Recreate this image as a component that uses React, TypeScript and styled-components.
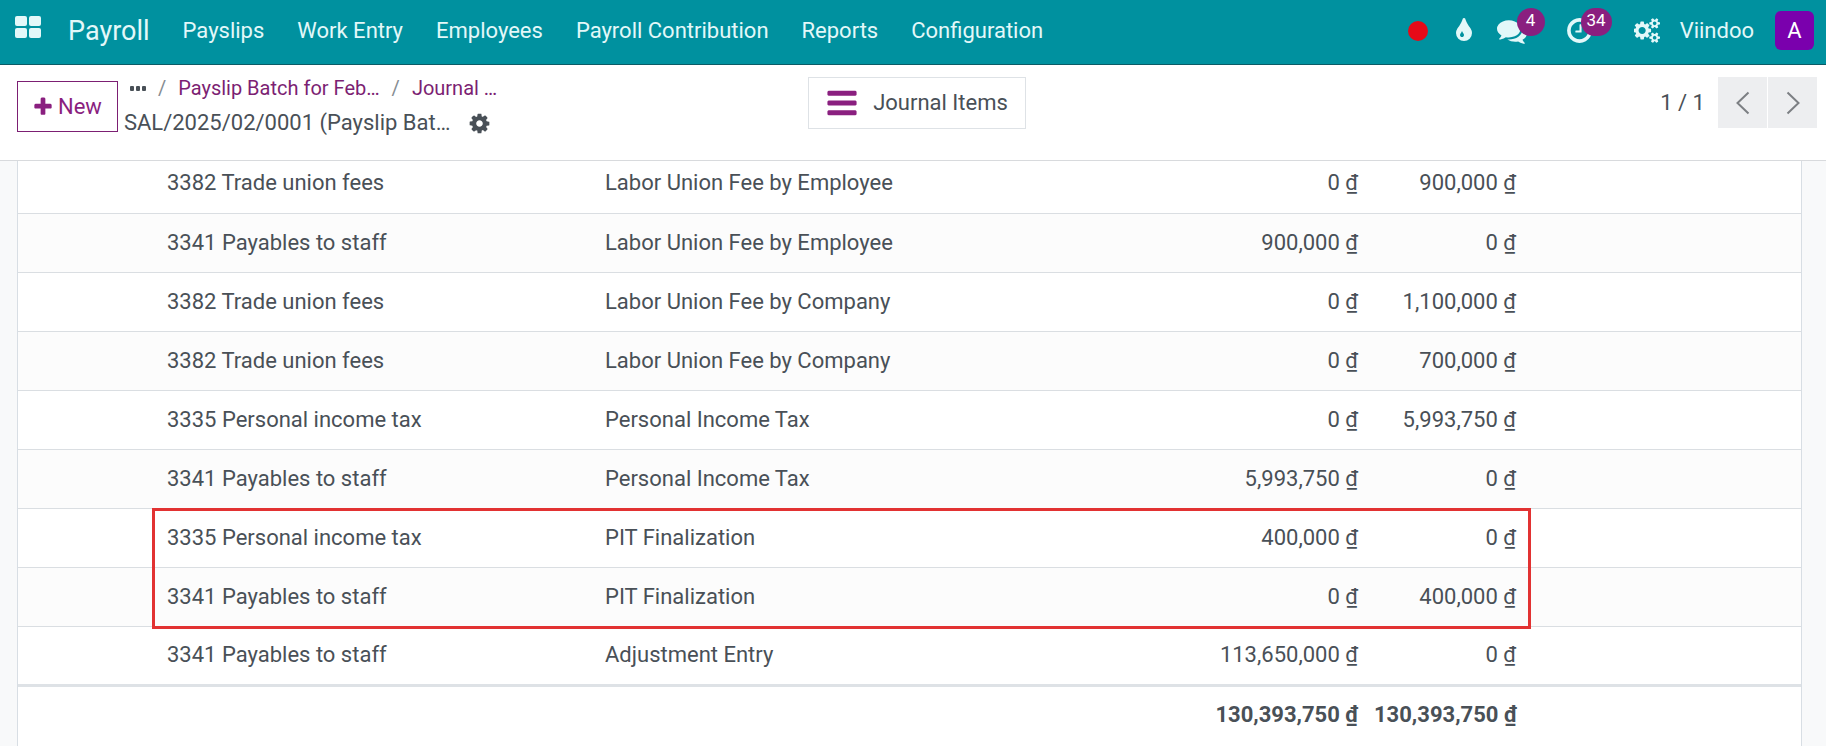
import React from "react";
import styled, { createGlobalStyle, css } from "styled-components";

const GlobalStyle = createGlobalStyle`
  *, *::before, *::after { box-sizing: border-box; }
  body {
    margin: 0;
    font-family: Roboto, "Liberation Sans", sans-serif;
    font-size: 22px;
    line-height: 32px;
    color: #495057;
    background: #f8f9fa;
  }
  button { font: inherit; color: inherit; border: 0; background: none; padding: 0; cursor: pointer; }
  a { color: inherit; text-decoration: none; }
`;

const Page = styled.div`
  display: flex;
  flex-direction: column;
  height: 100vh;
  overflow: hidden;
`;

/* ---------- icons ---------- */

const Svg = styled.svg`
  display: block;
  flex: none;
  fill: currentColor;
`;

type IconProps = { size: number; d: string; box?: number };

const Icon = ({ size, d, box = 1792 }: IconProps) => (
  <Svg width={Math.round((size * box) / 1792)} height={size} viewBox={`0 0 ${box} 1792`} aria-hidden="true">
    <path d={d} />
  </Svg>
);

const PLUS =
  "M1600 736v192q0 40-28 68t-68 28h-416v416q0 40-28 68t-68 28h-192q-40 0-68-28t-28-68v-416h-416q-40 0-68-28t-28-68v-192q0-40 28-68t68-28h416v-416q0-40 28-68t68-28h192q40 0 68 28t28 68v416h416q40 0 68 28t28 68z";
const BARS =
  "M1664 1344v128q0 26-19 45t-45 19h-1408q-26 0-45-19t-19-45v-128q0-26 19-45t45-19h1408q26 0 45 19t19 45zm0-512v128q0 26-19 45t-45 19h-1408q-26 0-45-19t-19-45v-128q0-26 19-45t45-19h1408q26 0 45 19t19 45zm0-512v128q0 26-19 45t-45 19h-1408q-26 0-45-19t-19-45v-128q0-26 19-45t45-19h1408q26 0 45 19t19 45z";
const CLOCK =
  "M1024 544v448q0 14-9 23t-23 9h-320q-14 0-23-9t-9-23v-64q0-14 9-23t23-9h224v-352q0-14 9-23t23-9h64q14 0 23 9t9 23zm416 352q0-148-73-273t-198-198-273-73-273 73-198 198-73 273 73 273 198 198 273 73 273-73 198-198 73-273zm224 0q0 209-103 385.500t-279.500 279.500-385.500 103-385.500-103-279.500-279.500-103-385.500 103-385.500 279.500-279.500 385.500-103 385.500 103 279.500 279.500 103 385.500z";
const COG =
  "M1152 896q0-106-75-181t-181-75-181 75-75 181 75 181 181 75 181-75 75-181zm512-109v222q0 12-8 23t-20 13l-185 28q-19 54-39 91 35 50 107 138 10 12 10 25t-9 23q-27 37-99 108t-94 71q-12 0-26-9l-138-108q-44 23-91 38-16 136-29 186-7 28-36 28h-222q-14 0-24.500-8.500t-11.500-21.500l-28-184q-49-16-90-37l-141 107q-10 9-25 9-14 0-25-11-126-114-165-168-7-10-7-23 0-12 8-23 15-21 51-66.500t54-70.500q-27-50-41-99l-183-27q-13-2-21-12.500t-8-23.500v-222q0-12 8-23t19-13l186-28q14-46 39-92-40-57-107-138-10-12-10-24 0-10 9-23 26-36 98.500-107.500t94.500-71.500q13 0 26 10l138 107q44-23 91-38 16-136 29-186 7-28 36-28h222q14 0 24.500 8.500t11.500 21.500l28 184q49 16 90 37l142-107q9-9 24-9 13 0 25 10 129 119 165 170 7 8 7 22 0 12-8 23-15 21-51 66.500t-54 70.500q26 50 41 98l183 28q13 2 21 12.500t8 23.500z";
const COMMENTS =
  "M1408 768q0 139-94 257t-256.500 186.500-353.500 68.500q-86 0-176-16-124 88-278 128-36 9-86 16h-3q-11 0-20.500-8t-11.500-21q-1-3-1-6.500t.5-6.500 2-6l2.500-5 3.500-5.500 4-5 4.500-5 4-4.500q5-6 23-25t26-29.500 22.500-29 25-38.500 20.500-44q-124-72-195-177t-71-224q0-139 94-257t256.500-186.500 353.500-68.500 353.500 68.500 256.500 186.500 94 257zm384 256q0 120-71 224.500t-195 176.500q10 24 20.500 44t25 38.500 22.500 29 26 29.500 23 25q1 1 4 4.500t4.500 5 4 5 3.500 5.500l2.500 5 2 6 .5 6.500-1 6.500q-3 14-13 22t-22 7q-50-7-86-16-154-40-278-128-90 16-176 16-271 0-472-132 58 4 88 4 161 0 309-45t264-129q125-92 192-212t67-254q0-77-23-152 129 71 204 178t75 230z";
const TINT =
  "M896 1152q0-36-20-69-1-1-15.500-22.500t-25.500-38-25-44-21-50.500q-4-16-21-16t-21 16q-7 23-21 50.500t-25 44-25.500 38-15.500 22.500q-20 33-20 69 0 53 37.500 90.500t90.500 37.500 90.500-37.500 37.500-90.500zm512-128q0 212-150 362t-362 150-362-150-150-362q0-145 81-275 6-9 62.500-90.500t101-151 99.500-178 83-201.500q9-30 34-47t51-17 51.500 17 33.500 47q28 93 83 201.500t99.500 178 101 151 62.500 90.500q81 127 81 275z";
const COGS_SMALL =
  "v140q0 16-149 31-12 27-30 52 51 113 51 138 0 4-4 7-122 71-124 71-8 0-46-47t-52-68q-20 2-30 2t-30-2q-14 21-52 68t-46 47q-2 0-124-71-4-3-4-7 0-25 51-138-18-25-30-52-149-15-149-31v-140q0-16 149-31 13-29 30-52-51-113-51-138 0-4 4-7 4-2 35-20t59-34 30-16q8 0 46 46.500t52 67.500q20-2 30-2t30 2q51-71 92-112l6-2q4 0 124 70 4 3 4 7 0 25-51 138 17 23 30 52 149 15 149 31z";
const COGS =
  "M832 896q0-106-75-181t-181-75-181 75-75 181 75 181 181 75 181-75 75-181zm768 512q0-52-38-90t-90-38-90 38-38 90q0 53 37.500 90.500t90.500 37.500 90.500-37.500 37.500-90.500zm0-1024q0-52-38-90t-90-38-90 38-38 90q0 53 37.500 90.500t90.500 37.500 90.500-37.500 37.500-90.500zm-384 421v185q0 10-7 19.500t-16 10.500l-155 24q-11 35-32 76 34 48 90 115 7 11 7 20 0 12-7 19-23 30-82.500 89.500t-78.500 59.500q-11 0-21-7l-115-90q-37 19-77 31-11 108-23 155-7 24-30 24h-186q-11 0-20-7.500t-10-17.500l-23-153q-34-10-75-31l-118 89q-7 7-20 7-11 0-21-8-144-133-144-160 0-9 7-19 10-14 41-53t47-61q-23-44-35-82l-152-24q-10-1-17-9.500t-7-19.500v-185q0-10 7-19.500t16-10.500l155-24q11-35 32-76-34-48-90-115-7-11-7-20 0-12 7-20 22-30 82-89t79-59q11 0 21 7l115 90q34-18 77-32 11-108 23-154 7-24 30-24h186q11 0 20 7.500t10 17.500l23 153q34 10 75 31l118-89q8-7 20-7 11 0 21 8 144 133 144 160 0 8-7 19-12 16-42 54t-45 60q23 48 34 82l152 23q10 2 17 10.500t7 19.500zm640 533" +
  COGS_SMALL +
  "m0-1024" +
  COGS_SMALL;

const AppsIcon = () => (
  <Svg width="26" height="22" viewBox="0 0 26 22" aria-hidden="true">
    <rect width="12" height="10" rx="2" />
    <rect x="14" width="12" height="10" rx="2" />
    <rect y="12" width="12" height="10" rx="2" />
    <rect x="14" y="12" width="12" height="10" rx="2" />
  </Svg>
);

const DotsIcon = () => (
  <Svg width="16" height="6" viewBox="0 0 16 6" aria-hidden="true">
    <rect y="1" width="4" height="5" rx="1" />
    <rect x="6" y="1" width="4" height="5" rx="1" />
    <rect x="12" y="1" width="4" height="5" rx="1" />
  </Svg>
);

const Chevron = ({ next }: { next?: boolean }) => (
  <Svg width="14" height="24" viewBox="0 0 14 24" aria-hidden="true">
    <path
      d={next ? "M1.500 1.500L12.500 12L1.500 22.500" : "M12.500 1.500L1.500 12L12.500 22.500"}
      fill="none"
      stroke="#7c7f83"
      strokeWidth="2"
    />
  </Svg>
);

/* ---------- top bar ---------- */

const NavBar = styled.header`
  display: flex;
  align-items: center;
  justify-content: space-between;
  flex: none;
  height: 65px;
  padding: 0 12px 3px 15px;
  background: #00919f;
  border-bottom: 1px solid #0b5b66;
  color: #e3f8f9;
`;

const Menu = styled.nav`
  display: flex;
  align-items: center;
  gap: 33px;
`;

const Brand = styled.div`
  display: flex;
  align-items: center;
  gap: 27px;
`;

const AppsButton = styled.button`
  padding-bottom: 7px;
`;

const BrandLink = styled.a`
  font-size: 27px;
`;

const Systray = styled.div`
  display: flex;
  align-items: center;
`;

const RecordDot = styled.button`
  width: 20px;
  height: 20px;
  margin-right: 22px;
  border-radius: 50%;
  background: #e60a18;
`;

const TrayButton = styled.button<{ $after: number }>`
  position: relative;
  margin-right: ${(p) => p.$after}px;
`;

const Badge = styled.span`
  position: absolute;
  right: -18px;
  top: -8px;
  min-width: 28px;
  height: 28px;
  padding: 0 6px;
  border-radius: 14px;
  background: #8a1f7f;
  color: #fff;
  font-size: 17px;
  line-height: 24px;
  text-align: center;
`;

const Avatar = styled.button`
  width: 39px;
  height: 39px;
  margin-left: 21px;
  border-radius: 6px;
  background: #7a00ad;
  color: #fff;
`;

/* ---------- control panel ---------- */

const ControlPanel = styled.section`
  display: grid;
  grid-template-columns: 1fr auto 1fr;
  align-items: start;
  flex: none;
  height: 96px;
  padding: 12px 9px 0 17px;
  background: #fff;
  border-bottom: 1px solid #d8dadd;
`;

const PanelStart = styled.div`
  display: flex;
  gap: 6px;
`;

const NewButton = styled.button`
  display: flex;
  align-items: center;
  gap: 4px;
  height: 51px;
  margin-top: 4px;
  padding: 0 15px 0 14px;
  border: 1px solid #7c1f73;
  color: #8a1f7f;
`;

const Crumbs = styled.div`
  display: flex;
  flex-direction: column;
`;

const Trail = styled.nav`
  display: flex;
  align-items: center;
  gap: 12px;
  height: 22px;
  padding-left: 6px;
  font-size: 20px;
  line-height: 22px;
`;

const CrumbLink = styled.a`
  color: #7c1f73;
`;

const Slash = styled.span`
  color: #868c92;
`;

const CurrentRecord = styled.div`
  display: flex;
  align-items: center;
  gap: 18px;
  height: 48px;
`;

const StatButton = styled.button`
  display: flex;
  align-items: center;
  gap: 14px;
  height: 52px;
  padding: 0 17px 0 16px;
  border: 1px solid #dee2e6;
  background: #fff;
`;

const Purple = styled.span`
  color: #8a1f7f;
`;

const Pager = styled.div`
  display: flex;
  align-items: center;
  justify-self: end;
  gap: 1px;
`;

const PagerCount = styled.span`
  margin-right: 12px;
`;

const PagerButton = styled.button`
  display: grid;
  place-items: center;
  width: 49px;
  height: 51px;
  background: #edeef0;
`;

/* ---------- journal item table ---------- */

const Content = styled.main`
  flex: 1;
  min-height: 0;
  overflow: hidden;
  padding: 0 24px 0 17px;
`;

const Sheet = styled.div`
  min-height: 100%;
  margin-top: -7px;
  border: solid #d8dee4;
  border-width: 0 1px;
  background: #fff;
  padding-bottom: 40px;
`;

const TableFrame = styled.div`
  position: relative;
`;

const Table = styled.table`
  width: 100%;
  table-layout: fixed;
  border-collapse: collapse;
`;

const Col = styled.col<{ $width?: number }>`
  ${(p) => p.$width && css`width: ${p.$width}px;`}
`;

const Row = styled.tr<{ $striped?: boolean }>`
  height: 59px;
  border-bottom: 1px solid #dadee2;
  background: ${(p) => (p.$striped ? "#fcfcfc" : "#fff")};
`;

const TotalRow = styled.tr`
  height: 59px;
  border-top: 3px solid #dee2e6;
  font-weight: 700;
`;

const Cell = styled.td<{ $number?: boolean }>`
  padding: 0 8px;
  text-align: ${(p) => (p.$number ? "right" : "left")};
  white-space: nowrap;
`;

const Highlight = styled.div`
  position: absolute;
  left: 134px;
  right: 270px;
  top: 354px;
  height: 121px;
  border: 3px solid #e23232;
  pointer-events: none;
`;

const MENU = ["Payslips", "Work Entry", "Employees", "Payroll Contribution", "Reports", "Configuration"];

const LINES = [
  ["3382 Trade union fees", "Labor Union Fee by Employee", "0 ₫", "900,000 ₫"],
  ["3341 Payables to staff", "Labor Union Fee by Employee", "900,000 ₫", "0 ₫"],
  ["3382 Trade union fees", "Labor Union Fee by Company", "0 ₫", "1,100,000 ₫"],
  ["3382 Trade union fees", "Labor Union Fee by Company", "0 ₫", "700,000 ₫"],
  ["3335 Personal income tax", "Personal Income Tax", "0 ₫", "5,993,750 ₫"],
  ["3341 Payables to staff", "Personal Income Tax", "5,993,750 ₫", "0 ₫"],
  ["3335 Personal income tax", "PIT Finalization", "400,000 ₫", "0 ₫"],
  ["3341 Payables to staff", "PIT Finalization", "0 ₫", "400,000 ₫"],
  ["3341 Payables to staff", "Adjustment Entry", "113,650,000 ₫", "0 ₫"],
];

export default function App() {
  return (
    <Page>
      <GlobalStyle />
      <NavBar>
        <Menu>
          <Brand>
            <AppsButton aria-label="Home menu">
              <AppsIcon />
            </AppsButton>
            <BrandLink href="#">Payroll</BrandLink>
          </Brand>
          {MENU.map((item) => (
            <a href="#" key={item}>
              {item}
            </a>
          ))}
        </Menu>
        <Systray>
          <RecordDot aria-label="Record" />
          <TrayButton $after={19} aria-label="Theme color">
            <Icon d={TINT} size={28} />
          </TrayButton>
          <TrayButton $after={38} aria-label="Messages">
            <Icon d={COMMENTS} size={30} />
            <Badge>4</Badge>
          </TrayButton>
          <TrayButton $after={40} aria-label="Activities">
            <Icon d={CLOCK} size={29} />
            <Badge>34</Badge>
          </TrayButton>
          <TrayButton $after={19} aria-label="Developer tools">
            <Icon d={COGS} size={25} box={1920} />
          </TrayButton>
          <a href="#">Viindoo</a>
          <Avatar aria-label="User menu">A</Avatar>
        </Systray>
      </NavBar>

      <ControlPanel>
        <PanelStart>
          <NewButton>
            <Icon d={PLUS} size={22} />
            New
          </NewButton>
          <Crumbs>
            <Trail aria-label="Breadcrumb">
              <button aria-label="More breadcrumbs">
                <DotsIcon />
              </button>
              <Slash>/</Slash>
              <CrumbLink href="#">Payslip Batch for Feb…</CrumbLink>
              <Slash>/</Slash>
              <CrumbLink href="#">Journal …</CrumbLink>
            </Trail>
            <CurrentRecord>
              <span>SAL/2025/02/0001 (Payslip Bat…</span>
              <button aria-label="Actions">
                <Icon d={COG} size={23} />
              </button>
            </CurrentRecord>
          </Crumbs>
        </PanelStart>
        <StatButton>
          <Purple>
            <Icon d={BARS} size={34} />
          </Purple>
          Journal Items
        </StatButton>
        <Pager>
          <PagerCount>1 / 1</PagerCount>
          <PagerButton aria-label="Previous">
            <Chevron />
          </PagerButton>
          <PagerButton aria-label="Next">
            <Chevron next />
          </PagerButton>
        </Pager>
      </ControlPanel>

      <Content>
        <Sheet>
          <TableFrame>
            <Table>
              <colgroup>
                <Col $width={141} />
                <Col $width={438} />
                <Col />
                <Col $width={170} />
                <Col $width={158} />
                <Col $width={277} />
              </colgroup>
              <tbody>
                {LINES.map(([account, label, debit, credit], i) => (
                  <Row key={i} $striped={i % 2 === 1}>
                    <Cell />
                    <Cell>{account}</Cell>
                    <Cell>{label}</Cell>
                    <Cell $number>{debit}</Cell>
                    <Cell $number>{credit}</Cell>
                    <Cell />
                  </Row>
                ))}
              </tbody>
              <tfoot>
                <TotalRow>
                  <Cell colSpan={3} />
                  <Cell $number>130,393,750 ₫</Cell>
                  <Cell $number>130,393,750 ₫</Cell>
                  <Cell />
                </TotalRow>
              </tfoot>
            </Table>
            <Highlight />
          </TableFrame>
        </Sheet>
      </Content>
    </Page>
  );
}
